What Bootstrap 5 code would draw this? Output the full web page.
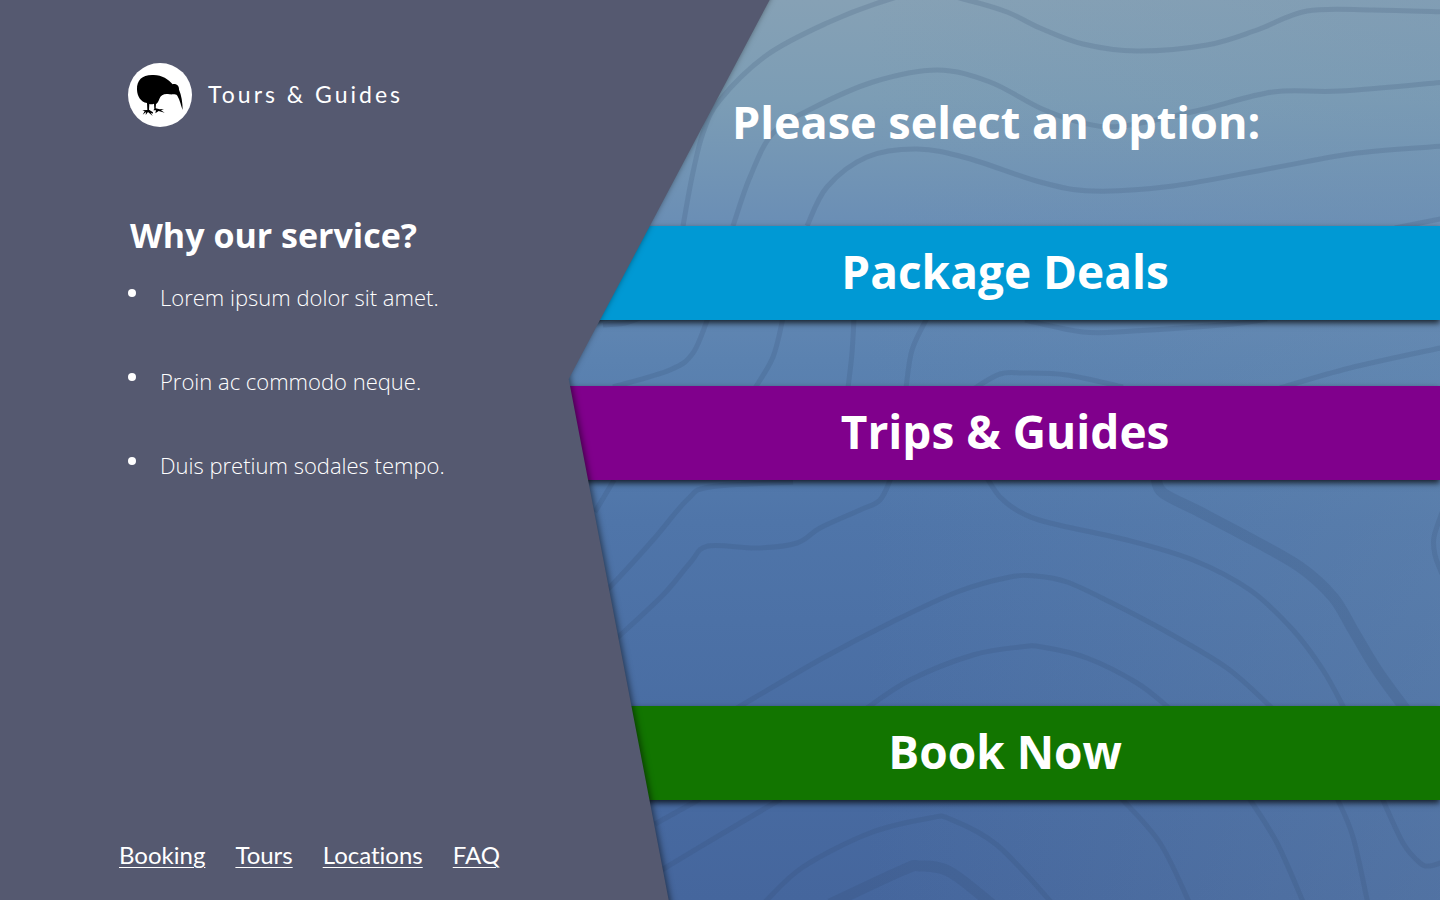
<!DOCTYPE html>
<html lang="en">
<head>
<meta charset="utf-8">
<meta name="viewport" content="width=device-width, initial-scale=1">
<title>Tours &amp; Guides</title>
<link href="https://cdn.jsdelivr.net/npm/bootstrap@5.3.0/dist/css/bootstrap.min.css" rel="stylesheet">
<style>
  body { font-family: "Open Sans", "Noto Sans", sans-serif; color: #fff; background: #555970; }
  .stage { display: grid; grid-template-columns: minmax(0, 1fr); isolation: isolate; }
  .stage > * { grid-area: 1 / 1; }
  .panel-col { width: 54%; z-index: 2; pointer-events: none; padding: 63px 0 29px 128px; }
  .panel-col a { pointer-events: auto; }
  .panel-shape { filter: drop-shadow(1px -4px 3px rgba(0, 0, 0, .5)); z-index: -1; }
  .brand-name, .foot-links { font-family: Lato, sans-serif; line-height: 32px; font-variant-ligatures: none; }
  .brand-name { font-size: 23px; letter-spacing: 3px; padding-bottom: 2px; }
  .why-title { font-size: 34px; line-height: 48px; font-weight: 700; margin: 84px 0 0 2px; }
  .why-list { font-size: 22px; line-height: 32px; font-weight: 300; margin-top: 22px; gap: 52px; }
  .why-list li { display: flex; gap: 24px; }
  .why-list li::before { content: ""; width: 8px; height: 8px; margin-top: 8px; border-radius: 50%; background: #fff; }
  .foot-links { font-size: 24px; gap: 30px; margin-left: -9px; }
  .foot-links a { color: #fff; text-decoration-thickness: 1px; text-underline-offset: 3px; }
  .options { width: 60.4%; justify-self: end; z-index: 1; }
  .options-title { font-size: 45px; line-height: 64px; font-weight: 700; padding: 90px 18px 72px 0; }
  .option { --bs-btn-color: #fff; --bs-btn-hover-color: #fff; --bs-btn-active-color: #fff;
    font-size: 46px; line-height: 64px; font-weight: 700; border: 0; padding: 13px 0 17px;
    box-shadow: 0 3px 6px rgba(0, 0, 0, .75); }
  .option-deals { --bs-btn-bg: #0099d4; --bs-btn-hover-bg: #008cc2; }
  .option-trips { --bs-btn-bg: #80008c; --bs-btn-hover-bg: #72007d; }
  .option-book { --bs-btn-bg: #127500; --bs-btn-hover-bg: #0f6400; }
  .option-list { gap: 66px; padding-bottom: 100px; }
  .option-slot { height: 94px; }
</style>
</head>
<body>
<div class="stage min-vh-100 overflow-hidden">
  <div class="position-relative" aria-hidden="true">
    <svg class="position-absolute w-100 h-100" viewBox="0 0 1440 900" preserveAspectRatio="xMidYMid slice">
      <defs>
        <linearGradient id="sea" x1="0" y1="0" x2="0" y2="1">
          <stop offset="0" stop-color="#86a1b5"/><stop offset=".11" stop-color="#7c9db5"/>
          <stop offset=".25" stop-color="#6a8eb5"/><stop offset=".4" stop-color="#5b82b0"/>
          <stop offset=".58" stop-color="#4f75a9"/><stop offset=".8" stop-color="#496da3"/><stop offset="1" stop-color="#45669d"/>
        </linearGradient>
        <linearGradient id="haze" x1="0" y1="0" x2="1" y2="0">
          <stop offset=".6" stop-color="#7394b2" stop-opacity="0"/><stop offset="1" stop-color="#7394b2" stop-opacity=".27"/>
        </linearGradient>
      </defs>
      <rect width="1440" height="900" fill="url(#sea)"/>
      <rect width="1440" height="900" fill="url(#haze)"/>
      <g id="contours" fill="none" stroke="#2f4a68" stroke-opacity=".17"></g>
    </svg>
  </div>

  <main class="options d-flex flex-column">
    <h1 class="options-title text-center mb-0">Please select an option:</h1>
    <div class="option-list d-flex flex-column">
      <button type="button" class="btn option option-deals rounded-0 w-100">Package Deals</button>
      <button type="button" class="btn option option-trips rounded-0 w-100">Trips &amp; Guides</button>
      <div class="option-slot"></div>
      <button type="button" class="btn option option-book rounded-0 w-100">Book Now</button>
    </div>
  </main>

  <aside class="panel-col position-relative d-flex flex-column">
    <svg class="panel-shape position-absolute top-0 start-0 w-100 h-100 overflow-visible" viewBox="0 0 778 900" preserveAspectRatio="none" aria-hidden="true">
      <path d="M-20-20H780L770 0 569 379 669 900 673 920H-20Z" fill="#555970"/>
    </svg>
    <header class="d-flex align-items-center gap-3">
      <svg width="64" height="64" viewBox="12 12 192 192" role="img" aria-label="Kiwi">
        <circle cx="108" cy="108" r="96" fill="#fff"/>
        <path d="M39 92C38 64 54 48 84 48C112 46 132 60 146 76C156 73 166 80 165 92C172 108 176 130 176 153C171 140 168 124 160 110C154 104 146 107 136 106C122 103 110 108 106 120C103 130 99 133 96 135L95 148L107 151L120 150L111 154L122 161L104 156L94 163L96 154L88 154L91 150L90 134C84 137 79 136 76 135L75 152L87 160L86 164L80 161L86 171L72 159L65 168L66 159L56 167L62 157L55 154L70 153L69 132C50 128 40 112 39 92Z"/>
      </svg>
      <div class="brand-name">Tours &amp; Guides</div>
    </header>
    <section>
      <h2 class="why-title">Why our service?</h2>
      <ul class="why-list list-unstyled d-flex flex-column mb-0">
        <li>Lorem ipsum dolor sit amet.</li>
        <li>Proin ac commodo neque.</li>
        <li>Duis pretium sodales tempo.</li>
      </ul>
    </section>
    <nav class="foot-links d-flex mt-auto" aria-label="Site">
      <a href="#booking">Booking</a>
      <a href="#tours">Tours</a>
      <a href="#locations">Locations</a>
      <a href="#faq">FAQ</a>
    </nav>
  </aside>
</div>
<script src="https://cdn.jsdelivr.net/npm/bootstrap@5.3.0/dist/js/bootstrap.bundle.min.js"></script>
<script>
  // Contour lines of the chart: stroke width, then x,y points joined by a smooth curve.
  const contours = [
    [5, '683,226 692,177 703,133 720,100 767,55 827,23 887,0 927,-8 967,0 1007,12 1040,28 1083,44 1137,51 1207,45 1257,30 1307,11 1373,10 1445,12'],
    [5, '733,226 750,177 773,133 813,108 873,82 937,70 990,82 1040,108 1083,123 1123,126 1200,110 1273,92 1340,91 1445,82'],
    [5, '807,226 827,187 867,157 917,149 967,158 1040,182 1093,191 1173,186 1273,168 1357,153 1445,146'],
    [5, '1395,228 1445,218'],
    [5, '603,325 625,323 640,318'],
    [5, '708,318 693,353 670,370 613,387'],
    [5, '783,318 773,357 755,388'],
    [5, '854,318 852,353 848,388'],
    [5, '927,318 912,350 906,388'],
    [5, '975,388 1000,374 1023,373 1067,375 1123,387'],
    [5, '1025,320 1083,332 1133,331 1233,324 1267,319'],
    [5, '1280,388 1350,368 1445,347'],
    [5, '614,480 595,512'],
    [5, '793,482 710,487 687,500 653,540 612,585 600,596'],
    [5, '891,478 880,500 860,510 820,528 797,543 757,548 708,546 690,563 663,595 615,640'],
    [5, '987,478 1000,497 1020,512 1050,523 1127,540 1193,560 1250,590 1293,630 1323,670 1344,708'],
    [11, '1156,478 1163,493 1200,512 1253,540 1300,567 1333,597 1353,630 1377,670 1406,710'],
    [5, '1443,510 1434,537 1435,555 1442,574'],
    [5, '737,708 823,658 890,623 957,592 1010,577 1036,576 1067,582 1110,602 1167,632 1227,668 1272,708'],
    [5, '867,708 910,680 973,655 1020,647 1042,647 1087,658 1137,683 1169,708'],
    [5, '700,799 655,824'],
    [5, '781,799 720,835 660,871'],
    [5, '764,903 803,867 870,833 930,818 950,819 997,845 1053,904'],
    [11, '830,904 903,870 920,866 950,872 994,906'],
    [5, '1121,798 1160,843 1190,904'],
    [5, '1249,798 1277,843 1304,904'],
    [5, '1337,798 1353,837 1368,904'],
    [5, '1382,798 1403,843 1420,863 1430,866 1443,862']
  ];
  const layer = document.getElementById('contours');
  for (const [width, list] of contours) {
    const p = list.split(' ').map(s => s.split(',').map(Number));
    let d = `M${p[0]}`;
    for (let i = 0; i < p.length - 1; i++) {
      const a = p[i - 1] || p[i], b = p[i], c = p[i + 1], e = p[i + 2] || c;
      d += `C${b[0] + (c[0] - a[0]) / 6},${b[1] + (c[1] - a[1]) / 6} ${c[0] - (e[0] - b[0]) / 6},${c[1] - (e[1] - b[1]) / 6} ${c}`;
    }
    const path = document.createElementNS('http://www.w3.org/2000/svg', 'path');
    path.setAttribute('d', d);
    path.setAttribute('stroke-width', width);
    layer.append(path);
  }
</script>
</body>
</html>
